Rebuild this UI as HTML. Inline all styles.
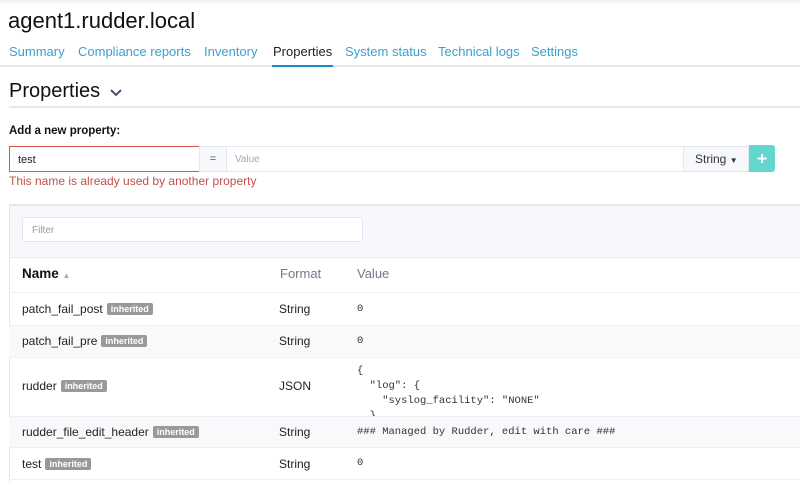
<!DOCTYPE html>
<html><head><meta charset="utf-8"><style>
*{box-sizing:border-box;margin:0;padding:0}
body{width:800px;height:483px;overflow:hidden;background:#fff;font-family:"Liberation Sans",sans-serif;color:#222;position:relative}
.a{position:absolute;white-space:nowrap}
.tab{position:absolute;top:44px;font-size:13px;color:#3aa0cc}
.mono{font-family:"Liberation Mono",monospace;font-size:10.5px;color:#333}
.badge{display:inline-block;background:#999;color:#fff;font-size:9px;font-weight:bold;padding:1px 4px;border-radius:2px;margin-left:4px;vertical-align:1px}
.row{position:absolute;left:9px;right:0;border-top:1px solid #eef0f4}
.cell{position:absolute;font-size:12px;color:#222}
</style></head><body>
<div class="a" style="left:0;top:0;width:800px;height:5px;background:linear-gradient(#eef0f6,#fff)"></div>
<div class="a" style="left:8px;top:8px;font-size:22px;color:#111">agent1.rudder.local</div>
<span class="tab" style="left:9px">Summary</span>
<span class="tab" style="left:78px">Compliance reports</span>
<span class="tab" style="left:204px">Inventory</span>
<span class="tab" style="left:273px;color:#222">Properties</span>
<span class="tab" style="left:345px">System status</span>
<span class="tab" style="left:438px">Technical logs</span>
<span class="tab" style="left:531px">Settings</span>
<div class="a" style="left:0;top:65px;width:800px;height:2px;background:#e3e7f0"></div>
<div class="a" style="left:272px;top:65px;width:61px;height:2px;background:#1a8fc4"></div>
<div class="a" style="left:9px;top:80px;font-size:20px;color:#111">Properties</div>
<svg class="a" style="left:109px;top:88px" width="14" height="10"><path d="M2 2 L7 7 L12 2" fill="none" stroke="#4a5668" stroke-width="2"/></svg>
<div class="a" style="left:9px;top:106px;width:791px;height:2px;background:#e3e7f0"></div>
<div class="a" style="left:9px;top:125px;font-size:11.5px;font-weight:bold;color:#111">Add a new property:</div>
<div class="a" style="left:9px;top:146px;width:191px;height:26px;border:1px solid #d9534f;font-size:11px;padding:7px 8px;color:#222">test</div>
<div class="a" style="left:199px;top:146px;width:28px;height:26px;background:#f7f8fb;border:1px solid #e3e7f0;font-size:11px;text-align:center;padding-top:6px;color:#555">=</div>
<div class="a" style="left:226px;top:146px;width:458px;height:26px;border:1px solid #e3e7f0;font-size:10px;padding:7px 8px;color:#aaa">Value</div>
<div class="a" style="left:683px;top:146px;width:66px;height:26px;background:#f7f8fb;border:1px solid #e3e7f0;font-size:12px;padding:5px 11px;color:#333">String <span style="font-size:8px">▼</span></div>
<div class="a" style="left:749px;top:145px;width:26px;height:27px;background:#62d6cf;border-radius:0 3px 3px 0"><svg width="26" height="27"><path d="M13 9v9M8.5 13.5h9" stroke="#fff" stroke-width="2"/></svg></div>
<div class="a" style="left:9px;top:174px;font-size:12px;color:#c0504d">This name is already used by another property</div>
<div class="a" style="left:9px;top:204px;width:791px;height:54px;background:#f7f8fb;border-top:2px solid #e3e7f0;border-left:1px solid #e3e7f0;border-bottom:1px solid #e8ebf2"></div>
<div class="a" style="left:22px;top:217px;width:341px;height:25px;background:#fff;border:1px solid #e3e7f0;border-radius:3px;font-size:10px;color:#999;padding:7px 9px">Filter</div>
<div class="a" style="left:9px;top:258px;width:1px;height:225px;background:#e3e7f0"></div>
<div class="a" style="left:22px;top:266px;font-size:13.5px;font-weight:bold;color:#111">Name <span style="font-size:8px;color:#aab;font-weight:normal">▲</span></div>
<div class="a" style="left:280px;top:266px;font-size:13px;color:#778">Format</div>
<div class="a" style="left:357px;top:266px;font-size:13px;color:#778">Value</div>
<div class="row" style="top:292px;height:33px"></div>
<div class="row" style="top:325px;height:32px;background:#f8f9fb"></div>
<div class="row" style="top:357px;height:59px"></div>
<div class="row" style="top:416px;height:31px;background:#f8f9fb"></div>
<div class="row" style="top:447px;height:33px;border-bottom:1px solid #eef0f4"></div>
<div class="cell a" style="left:22px;top:302px">patch_fail_post<span class="badge">inherited</span></div>
<div class="cell a" style="left:279px;top:302px">String</div>
<div class="mono a" style="left:357px;top:303px">0</div>
<div class="cell a" style="left:22px;top:334px">patch_fail_pre<span class="badge">inherited</span></div>
<div class="cell a" style="left:279px;top:334px">String</div>
<div class="mono a" style="left:357px;top:335px">0</div>
<div class="cell a" style="left:22px;top:379px">rudder<span class="badge">inherited</span></div>
<div class="cell a" style="left:279px;top:379px">JSON</div>
<div class="a" style="left:357px;top:364px;height:52px;overflow:hidden"><pre class="mono" style="line-height:15px">{
  "log": {
    "syslog_facility": "NONE"
  }</pre></div>
<div class="cell a" style="left:22px;top:425px">rudder_file_edit_header<span class="badge">inherited</span></div>
<div class="cell a" style="left:279px;top:425px">String</div>
<div class="mono a" style="left:357px;top:426px">### Managed by Rudder, edit with care ###</div>
<div class="cell a" style="left:22px;top:457px">test<span class="badge">inherited</span></div>
<div class="cell a" style="left:279px;top:457px">String</div>
<div class="mono a" style="left:357px;top:457px">0</div>
</body></html>
